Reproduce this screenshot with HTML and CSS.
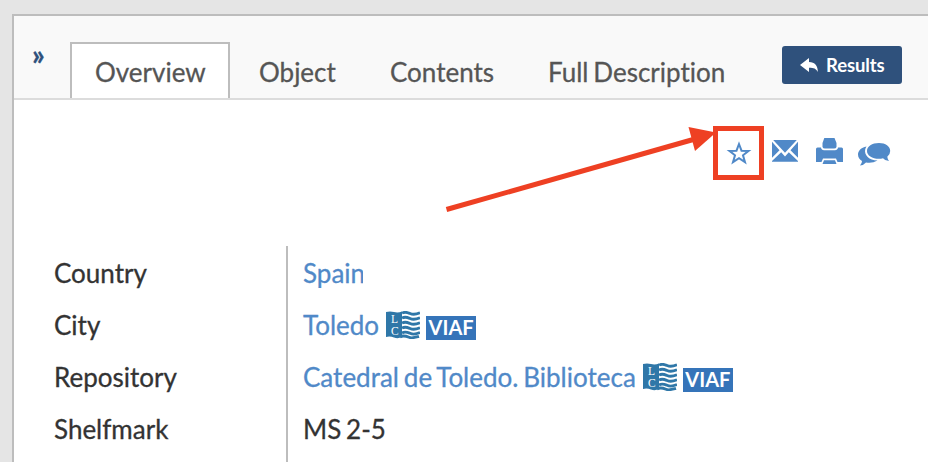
FILE: index.html
```html
<!DOCTYPE html>
<html lang="en">
<head>
<meta charset="utf-8">
<title>Overview</title>
<link rel="stylesheet" href="styles.css">
</head>
<body>
<main class="panel">
  <header class="bar">
    <a class="toggle">»</a>
    <nav class="tabs">
      <a class="tab active">Overview</a>
      <a class="tab object">Object</a>
      <a class="tab contents">Contents</a>
      <a class="tab">Full Description</a>
    </nav>
    <a class="results">
      <svg width="18" height="15" viewBox="0 0 18 15"><path fill="#fff" d="M0 7 9 0V4C15 4 18 8 17.800 14 16 10.500 14 9.700 9 9.700V14Z"/></svg>
      <span>Results</span>
    </a>
  </header>
  <div class="tools">
    <a class="favorite"><svg width="26" height="24" viewBox="0 0 26 24"><path fill="none" stroke="#5089c8" stroke-width="2" d="M13 3 15.500 9.700 22.600 9.900 17 14.300 19 21.200 13 17.200 7 21.200 9 14.300 3.400 9.900 10.500 9.700Z"/></svg></a>
    <svg class="mail" width="26" height="22" viewBox="0 0 26 22"><path fill="#5089c8" d="M1.200 0H24.800L13 12.700ZM0 1.800 7.500 10.300 0 17.800ZM26 1.800V17.800L18.500 10.300ZM9.200 12.300 13 16.500 16.800 12.300 26 21V21.800H0V21Z"/></svg>
    <svg class="print" width="27" height="26" viewBox="0 0 27 26"><path fill="#5089c8" d="M8.300 0H18.500L20.500 5V9Q20 10.500 18 10.500H9Q7 10.500 6.500 9V5ZM1.500 9.500H5Q5.500 12.300 8 12.300H19Q21.500 12.300 22 9.500H25.500Q27 9.500 27 11V24H21.500L20 20.500H7L5.500 24H0V11Q0 9.500 1.500 9.500ZM8 22.200H19L20.500 26H6.500Z"/></svg>
    <svg class="chat" width="33" height="24" viewBox="0 0 33 24"><path fill="#5089c8" d="M8.500 3.500C3 4.500 0 8 0 11.500 0 14.500 1.500 16.500 4 18Q4 20.500 2 22.500 6 22 8 19.500 14 20.800 19.500 17.500C11 17.300 6 12 7.200 6.500Q7.500 4.800 8.500 3.500Z"/><path fill="#5089c8" d="M21 0C14 0 9 3.500 9 8S14 15.800 21 15.800Q23 15.800 25 15.300 27 18 31 18 29.500 16 29.300 13.700 32.200 11.500 32.200 8C32.200 3.500 27.500 0 21 0Z"/></svg>
    <svg class="arrow" width="272" height="88" viewBox="0 0 272 88"><path fill="none" stroke="#ee4023" stroke-width="5" d="M1.500 84.500 250 14"/><path fill="#ee4023" d="M243.500 2 271 7.500 250 26Z"/></svg>
  </div>
  <dl class="record">
    <dt>Country</dt><dd class="link"><span class="country">Spain</span></dd>
    <dt>City</dt>
    <dd class="link">Toledo
      <svg class="lc" width="34" height="28" viewBox="0 0 34 28">
        <path class="lc-page" d="M0 1Q4 0 8 1T16 .5V26Q12 28 8 26.500T0 26Z"/>
        <path class="lc-waves" d="M16 2.200c3-2 5-1 8 .3s6 1 10-.8M16 7.200c3-2 5-1 8 .3s6 1 10-.8M16 12.200c3-2 5-1 8 .3s6 1 10-.8M16 17.200c3-2 5-1 8 .3s6 1 10-.8M16 22c3-2 5-1 8 .3s6 1 10-.8M14 26c3-2 6-1 9 .3s5 .5 10-1"/>
        <text x="5" y="11.500">L</text>
        <text x="5" y="24">C</text>
      </svg>
      <span class="viaf">VIAF</span>
    </dd>
    <dt>Repository</dt>
    <dd class="link">Catedral de Toledo. Biblioteca
      <svg class="lc" width="34" height="28" viewBox="0 0 34 28">
        <path class="lc-page" d="M0 1Q4 0 8 1T16 .5V26Q12 28 8 26.500T0 26Z"/>
        <path class="lc-waves" d="M16 2.200c3-2 5-1 8 .3s6 1 10-.8M16 7.200c3-2 5-1 8 .3s6 1 10-.8M16 12.200c3-2 5-1 8 .3s6 1 10-.8M16 17.200c3-2 5-1 8 .3s6 1 10-.8M16 22c3-2 5-1 8 .3s6 1 10-.8M14 26c3-2 6-1 9 .3s5 .5 10-1"/>
        <text x="5" y="11.500">L</text>
        <text x="5" y="24">C</text>
      </svg>
      <span class="viaf">VIAF</span>
    </dd>
    <dt>Shelfmark</dt><dd>MS 2-5</dd>
  </dl>
</main>
</body>
</html>
```
FILE: styles.css
```css
* { box-sizing: border-box; }
body {
  margin: 0;
  padding: 14px 0 0 12px;
  height: 462px;
  overflow: hidden;
  background: #e5e5e5;
  color: #333;
  font: 26px/30px Lato, sans-serif;
  font-variant-ligatures: none;
  word-spacing: -1.8px;
  -webkit-text-stroke: 0.3px;
}
svg { display: block; flex: none; }
.panel {
  height: 448px;
  border: solid #bdbdbd;
  border-width: 2px 0 0 2px;
  background: #fff;
}
.bar {
  display: flex;
  height: 84px;
  background: #f9f9f9;
  border-bottom: 2px solid #dcdcdc;
}
.toggle {
  width: 56px;
  padding: 23px 0 0 18px;
  color: #2f517c;
  font-size: 28px;
  font-weight: 700;
}
.tabs { display: flex; width: 712px; padding-top: 26px; color: #555; }
.tab { height: 56px; padding-top: 15px; white-space: nowrap; }
.active {
  width: 160px;
  margin-right: 29px;
  padding: 13px 0 0 23px;
  border: 2px solid #bdbdbd;
  border-bottom: 0;
  background: #fff;
}
.object { width: 131px; }
.contents { width: 158px; }
.results {
  display: flex;
  align-items: center;
  gap: 8px;
  width: 120px;
  height: 38px;
  margin-top: 30px;
  padding-left: 18px;
  border-radius: 3px;
  background: #2f517c;
  color: #fff;
  font-size: 18.500px;
  font-weight: 700;
  letter-spacing: -0.1px;
  -webkit-text-stroke: 0;
}
.tools {
  position: relative;
  display: flex;
  align-items: flex-start;
  height: 146px;
  padding: 26px 0 0 699px;
}
.favorite {
  width: 51px;
  height: 54px;
  padding: 10px 0 0 8px;
  border: 5px solid #ee4023;
}
.mail { margin: 14px 0 0 8px; }
.print { margin: 12px 0 0 18px; }
.chat { margin: 17px 0 0 15px; }
.arrow { position: absolute; left: 431px; top: 25px; }
.record {
  display: grid;
  grid-template-columns: 232px 1fr;
  grid-template-rows: 52px 52px 52px 60px;
  margin: 0;
  padding-left: 40px;
}
dt, dd { display: flex; align-items: flex-start; margin: 0; padding-top: 12px; white-space: nowrap; }
dd { padding-left: 15px; border-left: 2px solid #bdbdbd; }
.link { color: #5089c8; }
.country { width: 60px; overflow: hidden; }
.lc { margin: 1px 0 0 7px; -webkit-text-stroke: 0; }
.lc-page { fill: #2f77a8; }
.lc-waves { fill: none; stroke: #2f77a8; stroke-width: 2.800; }
.lc text { fill: #fff; font: 11.500px "Liberation Serif", serif; }
.viaf {
  width: 50px;
  height: 24px;
  margin: 6px 0 0 6px;
  background: #3574b9;
  color: #fff;
  font: 700 20px/23px Lato, sans-serif;
  text-align: center;
  -webkit-text-stroke: 0;
}
```
